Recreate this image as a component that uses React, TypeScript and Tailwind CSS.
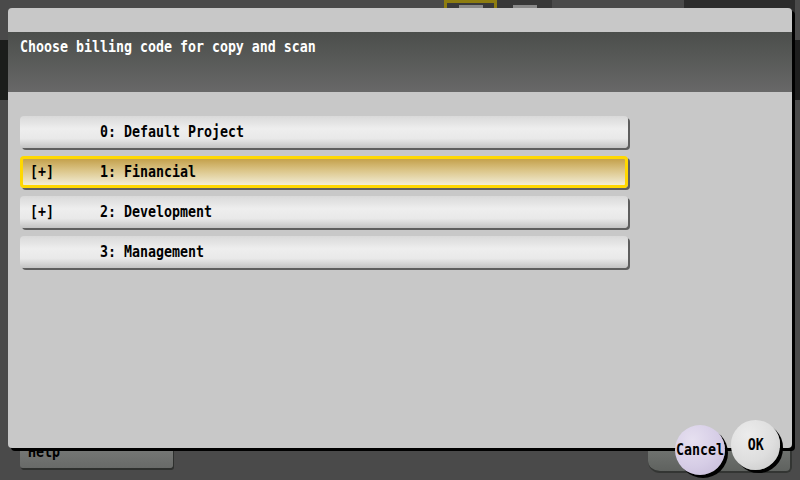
import React from "react";

const mono = "font-['DejaVu_Sans_Mono','Liberation_Mono',monospace]";
const txt = "inline-block text-[16px] leading-[18px] font-bold scale-x-[0.83]";

type Row = { plus: boolean; label: string; selected?: boolean };

const rows: Row[] = [
  { plus: false, label: "0: Default Project" },
  { plus: true, label: "1: Financial", selected: true },
  { plus: true, label: "2: Development" },
  { plus: false, label: "3: Management" },
];

function RowButton({ row }: { row: Row }) {
  const base =
    "flex items-center h-[32px] w-[608px] rounded-[4px] shadow-[2px_2px_0_#5e5e5e] text-black";
  const inner = (
    <>
      <span className="w-[70px]">
        {row.plus ? <span className={`${txt} origin-left`}>[+]</span> : null}
      </span>
      <span className={`${txt} origin-left whitespace-pre`}>{row.label}</span>
    </>
  );
  if (row.selected) {
    return (
      <div
        className={`${base} border-[3px] border-[#ffd800] pl-[7px] bg-[linear-gradient(to_bottom,#c4a14c,#dcc68a_45%,#f2edd6)]`}
      >
        {inner}
      </div>
    );
  }
  return (
    <div
      className={`${base} pl-[10px] bg-[linear-gradient(to_bottom,#d9d9d9,#eeeeee_40%,#e9e9e9_70%,#c3c3c3)]`}
    >
      {inner}
    </div>
  );
}

export default function App() {
  return (
    <div className={`relative w-[800px] h-[480px] overflow-hidden bg-[#4a4a4a] ${mono}`}>
      {/* underlying screen */}
      <div className="flex flex-col h-full">
        <div className="flex h-[40px]">
          <div className="w-[444px]" />
          <div className="w-[53px] h-[30px] border-[3px] border-[#8e7d10] bg-[#3a3a3a] flex justify-center pt-[2px]">
            <div className="w-[24px] h-[3px] bg-[#8a8a8a]" />
          </div>
          <div className="w-[55px] h-[30px] bg-[#383838] flex justify-center pt-[5px]">
            <div className="w-[24px] h-[3px] bg-[#8a8a8a]" />
          </div>
          <div className="w-[132px]" />
          <div className="w-[111px] h-[30px] bg-[#2c2c2c]" />
        </div>
        <div className="flex justify-between h-[60px]">
          <div className="w-[8px] bg-[#1b1d1b]" />
          <div className="w-[5px] bg-[#1e1e1e]" />
        </div>
        <div className="flex-1" />
        <div className="flex h-[40px] pl-[20px] pr-[8px]">
          <div className="w-[153px] h-[28px] rounded-[3px] bg-[linear-gradient(to_bottom,#7c7e7c,#686a68)] shadow-[1px_2px_0_#2e302e] pl-[8px] pt-0 text-black">
            <span className={`${txt} origin-left`}>Help</span>
          </div>
          <div className="ml-auto w-[144px] h-[33px] rounded-bl-[12px] rounded-br-[6px] bg-[linear-gradient(to_bottom,#777a77,#5f625f)] border-b-2 border-r-2 border-[#333533]" />
        </div>
      </div>

      {/* dialog */}
      <div className="absolute left-[8px] top-[8px] w-[784px] h-[440px] rounded-[4px] bg-[#c8c8c8] shadow-[3px_3px_0_#000] flex flex-col">
        <div className="h-[24px]" />
        <div className="h-[60px] bg-[linear-gradient(to_bottom,#4b4e4b,#686868)] pl-[12px] pt-[3px]">
          <span className={`${txt} origin-left text-white whitespace-pre`}>
            Choose billing code for copy and scan
          </span>
        </div>
        <div className="flex flex-col gap-[8px] pl-[12px] pt-[24px]">
          {rows.map((r) => (
            <RowButton key={r.label} row={r} />
          ))}
        </div>
      </div>

      {/* round buttons */}
      <div className="absolute left-[675px] top-[425px] w-[50px] h-[50px] rounded-full shadow-[3px_3px_0_#000] bg-[radial-gradient(circle_at_35%_30%,#e6e0f0,#d6cde6_55%,#c3b8d6)] flex items-center justify-center">
        <span className={`${txt} text-black`}>Cancel</span>
      </div>
      <div className="absolute left-[731px] top-[420px] w-[49px] h-[50px] rounded-full shadow-[3px_3px_0_#000] bg-[radial-gradient(circle_at_35%_30%,#ececec,#dedede_55%,#c6c6c6)] flex items-center justify-center">
        <span className={`${txt} text-black`}>OK</span>
      </div>
    </div>
  );
}
